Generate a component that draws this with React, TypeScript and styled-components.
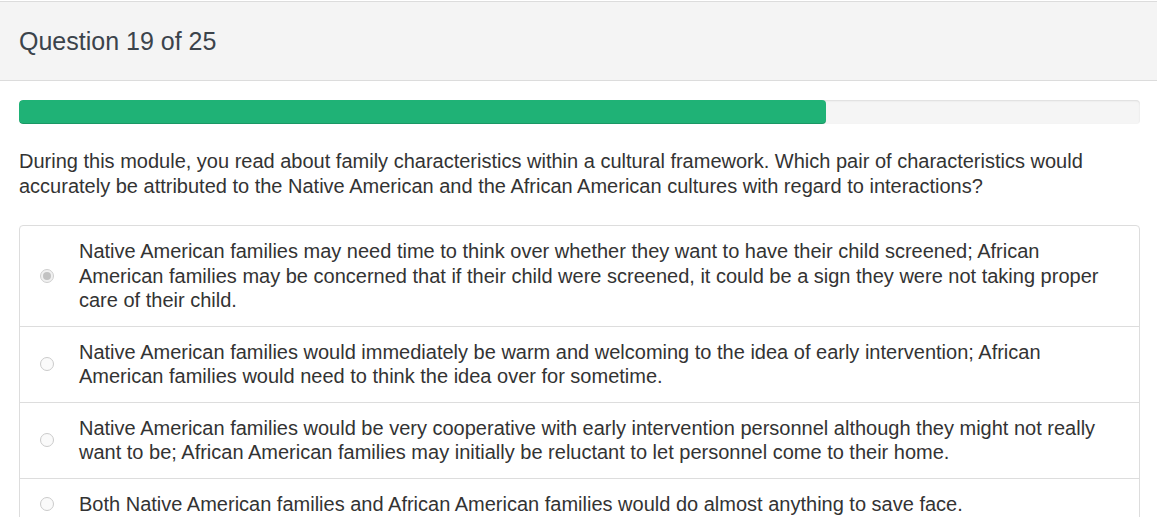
import React from "react";
import styled, { createGlobalStyle } from "styled-components";

const GlobalStyle = createGlobalStyle`
  html, body { margin: 0; padding: 0; background: #ffffff; }
  body { font-family: "Liberation Sans", Arial, Helvetica, sans-serif; color: #333333; }
  * { box-sizing: border-box; }
`;

const Page = styled.div`
  padding-top: 1px;
  width: 1157px;
`;

const Header = styled.header`
  height: 80px;
  background: #f4f4f4;
  border-top: 1px solid #dcdcdc;
  border-bottom: 1px solid #dcdcdc;
  display: flex;
  align-items: center;
  padding: 1px 19px 0;
`;

const Title = styled.h3`
  margin: 0;
  font-size: 25px;
  font-weight: 400;
  color: #3b434b;
  line-height: 1.1;
`;

const Body = styled.main`
  padding: 19px 17px 0 19px;
`;

const Track = styled.div`
  height: 24px;
  background: #f5f5f5;
  border-radius: 4px;
  box-shadow: inset 0 1px 2px rgba(0, 0, 0, 0.1);
  overflow: hidden;
`;

const Fill = styled.div`
  height: 100%;
  background: #1fb276;
  box-shadow: inset 0 -1px 0 rgba(0, 0, 0, 0.15);
  border-radius: 4px;
`;

const Prompt = styled.p`
  margin: 25px 0 26px;
  font-size: 20px;
  line-height: 25px;
  color: #333333;
`;

const List = styled.div`
  border: 1px solid #dddddd;
  border-radius: 4px;
`;

const Item = styled.label`
  display: flex;
  align-items: center;
  padding: 13px 30px 13px 20px;
  border-top: 1px solid #dddddd;
  &:first-child { border-top: none; }
`;

const Radio = styled.span<{ $checked?: boolean }>`
  flex: none;
  width: 14px;
  height: 14px;
  border-radius: 50%;
  border: 1px solid ${(p) => (p.$checked ? "#cfcfcf" : "#cbcbcb")};
  background: ${(p) => (p.$checked ? "#f1f1f1" : "#fafafa")};
  margin-right: 25px;
  display: flex;
  align-items: center;
  justify-content: center;
  &::after {
    content: "";
    width: 8px;
    height: 8px;
    border-radius: 50%;
    background: #c2c2c2;
    display: ${(p) => (p.$checked ? "block" : "none")};
  }
`;

const AnswerText = styled.span`
  font-size: 20px;
  line-height: 24.5px;
  color: #333333;
`;

const answers = [
  "Native American families may need time to think over whether they want to have their child screened; African American families may be concerned that if their child were screened, it could be a sign they were not taking proper care of their child.",
  "Native American families would immediately be warm and welcoming to the idea of early intervention; African American families would need to think the idea over for sometime.",
  "Native American families would be very cooperative with early intervention personnel although they might not really want to be; African American families may initially be reluctant to let personnel come to their home.",
  "Both Native American families and African American families would do almost anything to save face.",
];

export default function App() {
  const progress = 72;
  return (
    <Page>
      <GlobalStyle />
      <Header>
        <Title>Question 19 of 25</Title>
      </Header>
      <Body>
        <Track>
          <Fill style={{ width: `${progress}%` }} />
        </Track>
        <Prompt>
          During this module, you read about family characteristics within a cultural framework. Which pair of
          characteristics would accurately be attributed to the Native American and the African American cultures with
          regard to interactions?
        </Prompt>
        <List>
          {answers.map((a, i) => (
            <Item key={i}>
              <Radio $checked={i === 0} />
              <AnswerText>{a}</AnswerText>
            </Item>
          ))}
        </List>
      </Body>
    </Page>
  );
}
